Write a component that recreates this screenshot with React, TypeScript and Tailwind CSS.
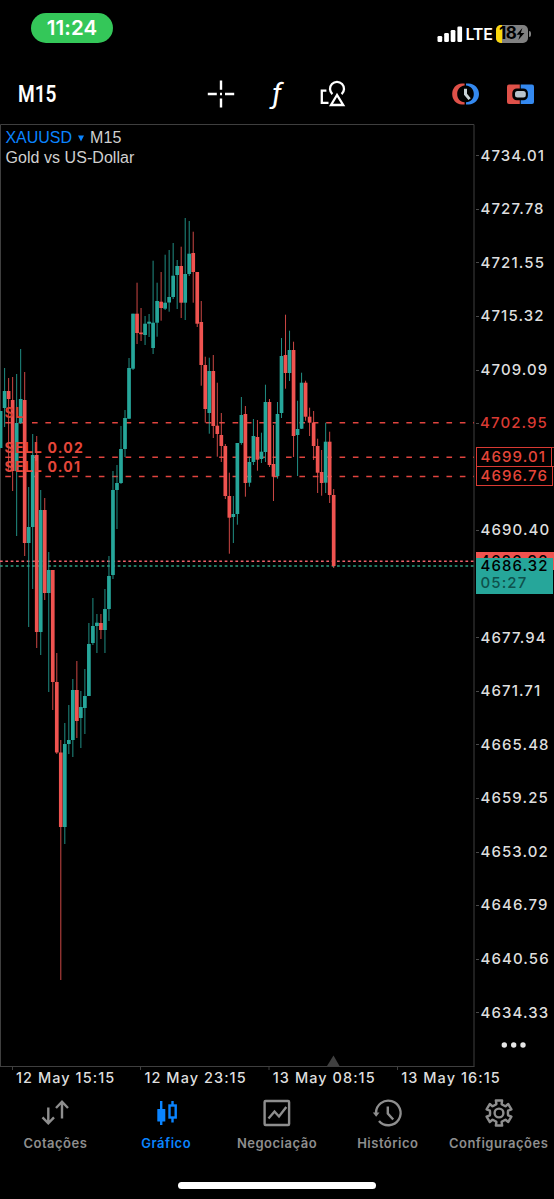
import React from "react";

type Candle = [color: "g" | "r", high: number, top: number, bottom: number, low: number];

const candles: Candle[] = [
  ["g", 411, 411, 448, 448], ["g", 368, 391, 408, 427], ["r", 378, 391, 399, 472], ["r", 377, 400, 471, 491],
  ["g", 374, 423, 471, 536], ["g", 349, 399, 423, 424], ["r", 372, 400, 543, 556], ["g", 487, 527, 543, 627],
  ["g", 434, 455, 527, 589], ["r", 436, 455, 632, 648], ["g", 490, 510, 632, 655], ["r", 498, 510, 593, 600],
  ["g", 552, 570, 593, 692], ["r", 570, 570, 682, 710], ["r", 653, 682, 752.5, 754], ["r", 740, 752.5, 827, 980],
  ["g", 723, 744, 827, 844], ["g", 705, 740, 744, 754], ["g", 679, 690, 740, 757], ["r", 661, 690, 721, 738],
  ["g", 691, 707, 718, 748], ["g", 669, 696, 708, 734], ["g", 623, 644, 696, 696], ["g", 598, 626, 643, 645],
  ["g", 614, 622.7, 626, 653], ["r", 614, 623, 630, 639], ["g", 589, 609, 630, 653], ["g", 556, 576, 609, 621],
  ["g", 471, 490, 575, 579], ["g", 465, 483, 490, 529], ["g", 426, 449, 483, 484], ["g", 410, 418, 449, 457],
  ["g", 358, 368, 418.7, 419], ["g", 313.7, 313.7, 368.7, 370], ["r", 282.7, 313.7, 333, 344], ["r", 308, 332.5, 334.2, 341],
  ["g", 316, 323.7, 335, 345], ["g", 314, 321.7, 323.7, 337], ["g", 260.7, 322.7, 348, 354], ["g", 282.7, 301, 322.7, 336.7],
  ["r", 272, 301.7, 308, 320.7], ["g", 254.7, 302.7, 308.7, 310], ["g", 250, 297, 302.5, 311.7], ["g", 243, 275.7, 297, 299],
  ["g", 260, 266, 275, 309], ["r", 246.7, 266, 302.7, 318], ["g", 218, 274, 302.7, 320], ["g", 221, 253.7, 274, 276],
  ["r", 231.7, 253, 272, 302.7], ["r", 272, 272, 323.7, 327], ["r", 301, 322, 365, 385.7], ["r", 356.7, 365, 409, 422.7],
  ["g", 357.7, 371, 413, 433.7], ["r", 355, 371, 426, 438], ["r", 382.7, 425.7, 434, 456.7], ["r", 413, 435, 446, 462],
  ["r", 444, 446, 496, 499], ["r", 472.7, 496, 517.7, 553.7], ["g", 496, 514, 517, 543], ["g", 443, 443, 514, 524.7],
  ["g", 397, 415, 443, 444.7], ["r", 406, 414, 483, 496.7], ["g", 456.7, 462, 482.7, 486.7], ["g", 419, 436, 462, 465],
  ["r", 420, 437, 459.7, 470.7], ["g", 432.7, 451.7, 459, 463], ["g", 384.7, 402, 452, 462], ["r", 399, 402, 465, 467],
  ["r", 425, 464, 476.7, 501], ["g", 402, 414, 476, 478.7], ["g", 338, 356, 413, 418], ["r", 314.7, 355, 373, 388.7],
  ["g", 330.7, 350, 373, 381], ["r", 341.7, 350, 436, 457], ["g", 400.7, 429, 435, 476], ["g", 372.7, 382.7, 428.7, 429],
  ["r", 380.7, 382.7, 416.7, 420.7], ["r", 407.7, 416.7, 422.7, 436], ["r", 411, 422.7, 446, 460], ["r", 438.7, 446, 472.7, 493],
  ["r", 450, 472, 483, 495.7], ["g", 422.7, 441.7, 482.7, 493], ["r", 431.7, 441.7, 495, 503], ["r", 489, 495, 566, 568],
];

const prices: (string | null)[] = [
  "4734.01", "4727.78", "4721.55", "4715.32", "4709.09", null, null, "4690.40", null,
  "4677.94", "4671.71", "4665.48", "4659.25", "4653.02", "4646.79", "4640.56", "4634.33",
];

const times = ["12 May 15:15", "12 May 23:15", "13 May 08:15", "13 May 16:15"];

const GREEN = "#26a69a";
const RED = "#ef5350";

function StatusBar() {
  return (
    <header className="flex h-[60px] shrink-0 items-start justify-between pr-[23px] pl-[31px] pt-[13px]">
      <div className="flex h-[30px] w-[82px] items-center justify-center rounded-full bg-[#34c759] text-[20.5px] font-semibold tracking-[0.15px]">
        11:24
      </div>
      <div className="mt-[11px] flex h-[19px] items-center">
        <svg width="26" height="18" viewBox="0 0 26 18" fill="#fff">
          <rect x="0.5" y="11" width="4.7" height="6" rx="1.3" />
          <rect x="7.2" y="8" width="4.7" height="9" rx="1.3" />
          <rect x="13.7" y="5" width="4.7" height="12" rx="1.3" />
          <rect x="20.4" y="1.5" width="4.7" height="15.5" rx="1.3" />
        </svg>
        <span className="ml-[3px] w-[30px] text-[16px] font-semibold tracking-[-0.2px]">LTE</span>
        <div className="relative flex h-[18px] w-[32px] items-center overflow-hidden rounded-[5px] bg-[#818181]">
          <span className="absolute inset-y-0 left-0 w-[6px] bg-[#fbd80b]" />
          <span className="relative ml-[3.5px] text-[17px] leading-none font-bold tracking-[-0.5px] text-black">18</span>
          <svg className="relative shrink-0" width="9" height="12" viewBox="0 0 9 12">
            <path d="M6.4 0 0.5 6.8H4L2.3 12 8.4 5H4.8Z" fill="#000" />
          </svg>
        </div>
        <span className="ml-[1.5px] h-[6px] w-[2px] rounded-r-full bg-[#818181]" />
      </div>
    </header>
  );
}

function Toolbar() {
  return (
    <div className="flex h-[64px] shrink-0 items-center pt-[3px] pl-[18px]">
      <span className="w-[187px] pt-[3px] font-[Roboto] text-[23px] font-semibold">
        <span className="inline-block origin-left scale-x-[0.83]">M15</span>
      </span>
      <svg width="32" height="32" viewBox="205 77.5 32 32" stroke="#fff" strokeWidth="2.4" fill="none">
        <path d="M207.8 93.5h9M225 93.5h9.2M221 80v9.2M221 98v9M220 93.5h2" />
      </svg>
      <span className="w-[83px] pl-[35px] font-[Roboto] text-[27px] leading-[32px] font-normal italic">
        <span className="inline-block origin-left scale-x-[1.1]">ƒ</span>
      </span>
      <svg width="28" height="32" viewBox="320 77.5 28 32" stroke="#fff" strokeWidth="2.3" fill="none">
        <path d="M332.4 93.6A7 7 0 1 1 341.6 93.6M326.4 90.2H321.8V102.3H328.5M337 94.5 331 104.5H343.2Z" />
      </svg>
      <svg className="ml-[102px]" width="32" height="32" viewBox="450 77.5 32 32" fill="none">
        <path d="M464.6 82.9H462C455.8 83.2 452.2 88 452.2 93.4S455.8 103.6 462 104H464.6V101.8C460 101.2 457.2 98 457.2 93.4S460 85.6 464.6 85Z" fill="#df5149" />
        <path d="M466 82.9H468.5C475 83.2 479 88 479 93.4S475 103.6 468.5 104H466V101.8C471 101.2 473.8 98 473.8 93.4S471 85.6 466 85Z" fill="#3489f0" />
        <path d="M465.5 88.3V93.8L469.6 98.6" stroke="#c9d1d6" strokeWidth="3" />
      </svg>
      <svg className="ml-[23px]" width="30" height="32" viewBox="505 77.5 30 32">
        <path d="M519.8 84H509A2 2 0 0 0 507 86V101.5A2 2 0 0 0 509 103.5H519.8Z" fill="#df5149" />
        <path d="M520.7 84H532A2 2 0 0 1 534 86V101.5A2 2 0 0 1 532 103.5H520.7Z" fill="#3489f0" />
        <rect x="512.3" y="88" width="15.6" height="11.8" rx="4.5" fill="#000" />
        <rect x="515" y="90.6" width="10.8" height="6.5" rx="2.5" fill="#b9c4cc" />
      </svg>
    </div>
  );
}

function Chart() {
  return (
    <div className="relative h-[946px] w-[476px] shrink-0">
      <svg className="block" width="476" height="946" viewBox="0 124 476 946">
        <path d="M0.5 1066V124.5H474V1066.5M0 1066.5H474.5" fill="none" stroke="#3f3f3f" />
        <path d="M12.5 1067v4M140.5 1067v4M269 1067v4M397.5 1067v4" stroke="#3f3f3f" />
        <path d="M327 1066 333.5 1055.5 339.5 1066Z" fill="#404040" />
        <g strokeWidth="1.5" stroke="#e0443f" strokeDasharray="5.6 7.77" strokeDashoffset="8.1">
          <path d="M0 422.7H474M0 457.2H474M0 476.5H474" />
        </g>
        <path d="M0 561.3H474" stroke="#f0616b" strokeWidth="1.6" strokeDasharray="2.7 2.65" />
        <path d="M0 566H474" stroke="#2fa083" strokeWidth="1.7" strokeDasharray="2.7 2.65" />
        {candles.map(([color, high, top, bottom, low], i) => {
          const x = 0.6 + i * 4.013;
          const fill = color === "g" ? GREEN : RED;
          return (
            <g key={i} fill={fill}>
              <rect x={x - 0.5} y={high} width="1" height={low - high} opacity="0.85" />
              <rect x={x - 1.85} y={top} width="3.7" height={bottom - top} />
            </g>
          );
        })}
      </svg>
      <div className="absolute top-[4px] left-[5.5px] font-['Liberation_Sans'] text-[16px] leading-[20px] text-[#d0d0d0]">
        <div className="flex items-center">
          <span className="tracking-[-0.05px] text-[#0a84ff]">XAUUSD</span>
          <svg className="mr-[6px] ml-[6px]" width="6" height="7" viewBox="0 0 6 7">
            <path d="M0 0.5H6L3 6.5Z" fill="#0a84ff" />
          </svg>
          <span className="tracking-[0.2px]">M15</span>
        </div>
        <div className="tracking-[0.05px]">Gold vs US-Dollar</div>
      </div>
      <div className="absolute top-[279px] left-[4.5px] text-[14px] leading-[20px] font-bold tracking-[1.25px] text-[#d9402f]">SL</div>
      <div className="absolute top-[314px] left-[4.5px] text-[14px] leading-[20px] font-bold tracking-[1.25px] text-[#e5463a]">SELL 0.02</div>
      <div className="absolute top-[333px] left-[4.5px] text-[14px] leading-[20px] font-bold tracking-[1.25px] text-[#e5463a]">SELL 0.01</div>
    </div>
  );
}

function PriceAxis() {
  return (
    <div className="relative flex h-[946px] flex-1 flex-col pt-[5px] text-[15px] font-medium tracking-[1.1px] text-[#dedede]">
      {prices.map((price, i) => (
        <div key={i} className="flex h-[53.57px] shrink-0 items-center">
          <span className="mr-[1.5px] h-px w-[3px] bg-[#4a4a4a]" />
          {price}
        </div>
      ))}
      <div className="absolute top-[289px] left-[4px] leading-[20px] text-[#d93a33]">4702.95</div>
      <div className="absolute top-[323px] left-0 h-[20px] w-[80px] border border-[#b8302a]" />
      <div className="absolute top-[323px] left-0 flex h-[20px] w-[76px] items-center border border-[#d93a33] bg-black pl-[3.5px] text-[#e5463a]">4699.01</div>
      <div className="absolute top-[342px] left-0 flex h-[20px] w-[77px] items-center border border-[#d93a33] bg-black pl-[3.5px] text-[#e5463a]">4696.76</div>
      <div className="absolute top-[428px] left-0 flex h-[18px] w-[78px] items-center bg-[#ef5350] pl-[4px] text-black">4686.92</div>
      <div className="absolute top-[434px] left-0 h-[36px] w-[77px] bg-[#26a69a] pl-[4.5px] text-black">
        <div className="h-[17px] leading-[16px]">4686.32</div>
        <div className="leading-[16px] text-[#0e524c]">05:27</div>
      </div>
      <svg className="absolute top-[918px] left-[25px]" width="26" height="6" viewBox="0 0 26 6" fill="#e6e6e6">
        <circle cx="3.3" cy="3" r="2.7" /><circle cx="12.7" cy="3" r="2.7" /><circle cx="22" cy="3" r="2.7" />
      </svg>
    </div>
  );
}

const gear = Array.from({ length: 6 }, (_, i) => {
  const base = -90 + i * 60;
  return [[-23, 9], [-16, 9.4], [-14, 12.9], [14, 12.9], [16, 9.4], [23, 9]]
    .map(([a, r]) => {
      const t = ((base + a) * Math.PI) / 180;
      return `${(15 + r * Math.cos(t)).toFixed(2)},${(15 + r * Math.sin(t)).toFixed(2)}`;
    })
    .join(" ");
}).join(" ");

const tabs = [
  { label: "Cotações", icon: <path d="M8.3 9.5V25.5M2.5 19.3 8.3 25.3 14 19.3M22 20.5V3.5M16 10 22 3.7 28 10" /> },
  {
    label: "Gráfico",
    active: true,
    icon: <><path d="M10.2 3V27M21.5 3V7.5M21.5 19.5V24.5" /><rect x="6.3" y="11" width="8" height="12.5" rx="0.5" fill="currentColor" stroke="none" /><rect x="18.5" y="7.5" width="6.2" height="12" /></>,
  },
  { label: "Negociação", icon: <><rect x="2.6" y="3" width="24.5" height="24" rx="1" /><path d="M6.5 20.5 12.5 13.5 17 18.5 24.3 9" /></> },
  { label: "Histórico", icon: <><path d="M3 15A12.3 12.3 0 1 1 6 23" /><path d="M-0.2 14.5H6.5L3.2 18.8Z" fill="currentColor" stroke="none" /><path d="M14.8 8.5V15.5L20.2 21.5" /></> },
  { label: "Configurações", icon: <><polygon points={gear} strokeLinejoin="round" /><circle cx="15" cy="15" r="4.4" /></> },
];

function TabBar() {
  return (
    <nav className="grid h-[89px] shrink-0 grid-cols-5">
      {tabs.map((tab) => (
        <div key={tab.label} className={tab.active ? "flex flex-col items-center pt-[5px] text-[#0a84ff]" : "flex flex-col items-center pt-[5px] text-[#8e8e8e]"}>
          <svg className="overflow-visible" width="30" height="30" viewBox="0 0 30 30" fill="none" stroke="currentColor" strokeWidth="2.4">{tab.icon}</svg>
          <span className="mt-[6px] text-[13px] leading-[18px] font-semibold tracking-[0.5px] whitespace-nowrap">{tab.label}</span>
        </div>
      ))}
    </nav>
  );
}

export default function App() {
  return (
    <div className="flex h-[1199px] w-[554px] flex-col overflow-hidden bg-black font-[Inter,sans-serif] text-white">
      <StatusBar />
      <Toolbar />
      <main className="flex h-[943px] shrink-0">
        <Chart />
        <PriceAxis />
      </main>
      <div className="flex h-[26px] shrink-0 items-start pt-[1px] pl-[16px] text-[14.5px] leading-[20px] font-medium tracking-[1.05px] text-[#dedede]">
        {times.map((time) => (
          <span key={time} className="w-[128.4px] shrink-0 whitespace-nowrap">{time}</span>
        ))}
      </div>
      <TabBar />
      <div className="ml-[178px] h-[7px] w-[198px] shrink-0 rounded-full bg-white" />
    </div>
  );
}
